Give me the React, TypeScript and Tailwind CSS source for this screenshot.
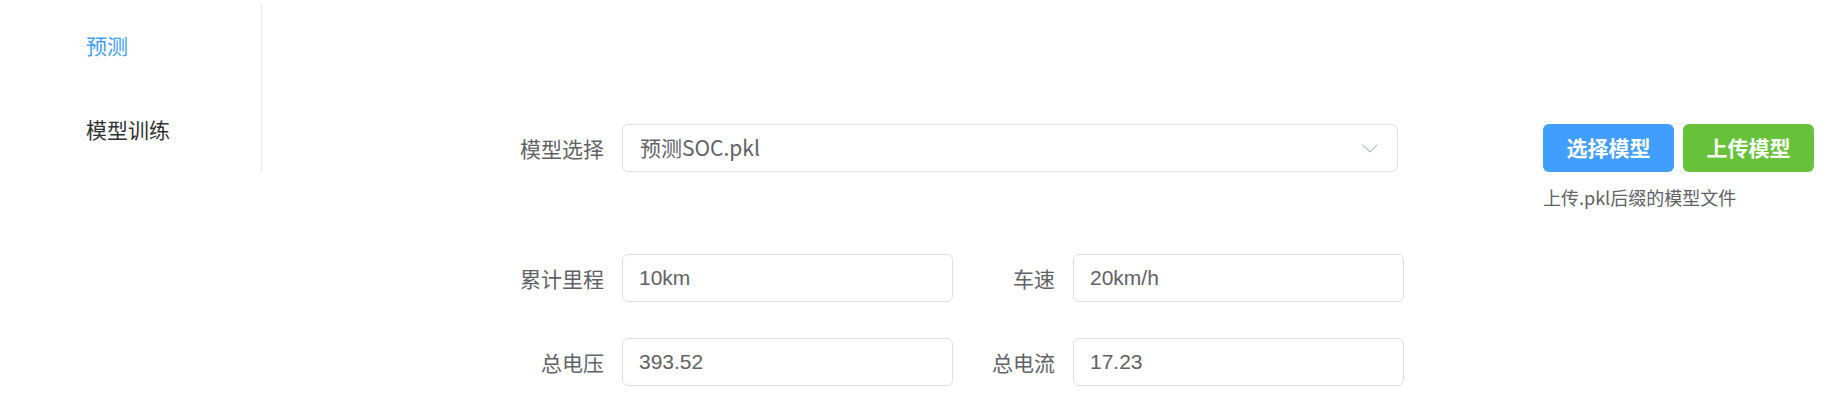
import React from "react";

const cjk = { fontFamily: '"Noto Sans CJK SC", "Noto Sans", sans-serif' };
const inputFont = { fontFamily: '"Liberation Sans", "Noto Sans CJK SC", sans-serif' };

function Label({ text, w }: { text: string; w: string }) {
  return (
    <div
      className={`${w} h-[48px] pr-[18px] text-right text-[21px] leading-[48px] text-[#606266] shrink-0`}
      style={cjk}
    >
      {text}
    </div>
  );
}

function Field({ value }: { value: string }) {
  return (
    <div
      className="w-[331px] h-[48px] shrink-0 rounded-[6px] border border-[#dcdfe6] bg-white pl-[16px] flex items-center text-[21px] text-[#606266]"
      style={inputFont}
    >
      {value}
    </div>
  );
}

export default function App() {
  return (
    <div className="flex min-h-[415px] w-[1844px] bg-white" style={cjk}>
      <aside className="w-[262px] shrink-0 pt-[4px]">
        <ul className="border-r border-[#e6e6e6] h-[168px]">
          <li className="h-[84px] pl-[86px] flex items-center text-[21px] text-[#409eff]">预测</li>
          <li className="h-[84px] pl-[86px] flex items-center text-[21px] text-[#303133]">模型训练</li>
        </ul>
      </aside>
      <main className="flex-1 pl-[222px] pt-[124px]">
        <div className="flex items-start">
          <Label text="模型选择" w="w-[138px]" />
          <div
            className="w-[776px] h-[48px] rounded-[6px] border border-[#dcdfe6] bg-white pl-[17px] pr-[19px] flex items-center justify-between text-[21px] text-[#606266]"
            style={cjk}
          >
            <span>预测SOC.pkl</span>
            <svg width="16" height="9" viewBox="0 0 16 9" fill="none">
              <path d="M0.8 0.8 L8 8 L15.2 0.8" stroke="#b8bcc4" strokeWidth="1.2" />
            </svg>
          </div>
          <div className="ml-[145px] flex flex-col">
            <div className="flex gap-[9px]">
              <button className="w-[131px] h-[48px] rounded-[6px] bg-[#409eff] text-white text-[21px] font-semibold">
                选择模型
              </button>
              <button className="w-[131px] h-[48px] rounded-[6px] bg-[#67c23a] text-white text-[21px] font-semibold">
                上传模型
              </button>
            </div>
            <div className="mt-[13px] text-[18px] leading-[24px] text-[#606266]">上传.pkl后缀的模型文件</div>
          </div>
        </div>
        <div className="flex items-start mt-[45px]">
          <Label text="累计里程" w="w-[138px]" />
          <Field value="10km" />
          <Label text="车速" w="w-[120px]" />
          <Field value="20km/h" />
        </div>
        <div className="flex items-start mt-[36px]">
          <Label text="总电压" w="w-[138px]" />
          <Field value="393.52" />
          <Label text="总电流" w="w-[120px]" />
          <Field value="17.23" />
        </div>
      </main>
    </div>
  );
}
